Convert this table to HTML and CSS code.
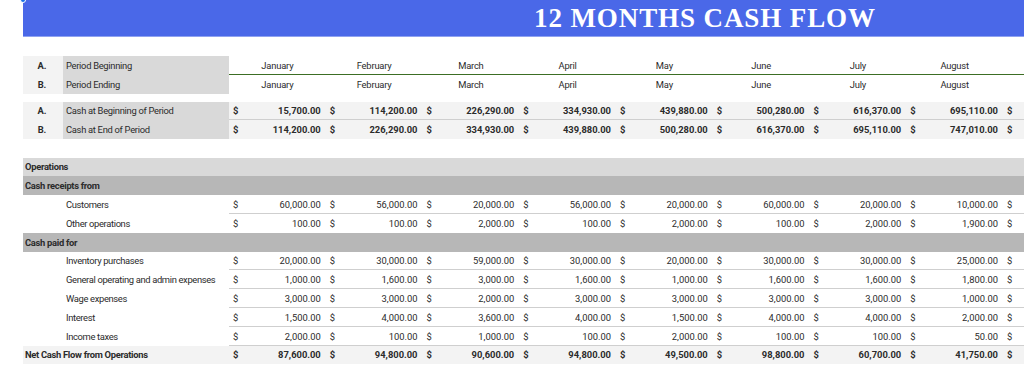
FILE: index.html
```html
<!DOCTYPE html>
<html lang="en">
<head>
<meta charset="utf-8">
<title>12 Months Cash Flow</title>
<link rel="stylesheet" href="styles.css">
</head>
<body>
<div class="sheet">
  <header class="banner">
    <span class="handle"></span>
    <h1 class="title">12 MONTHS CASH FLOW</h1>
  </header>

  <section class="block period">
    <div class="row green-below">
      <div class="letter">A.</div><div class="label">Period Beginning</div>
      <div class="m">January</div><div class="m">February</div><div class="m">March</div><div class="m">April</div><div class="m">May</div><div class="m">June</div><div class="m">July</div><div class="m">August</div><div class="m"></div>
    </div>
    <div class="row">
      <div class="letter">B.</div><div class="label">Period Ending</div>
      <div class="m">January</div><div class="m">February</div><div class="m">March</div><div class="m">April</div><div class="m">May</div><div class="m">June</div><div class="m">July</div><div class="m">August</div><div class="m"></div>
    </div>
  </section>

  <section class="block cash">
    <div class="row strong line-below">
      <div class="letter">A.</div><div class="label">Cash at Beginning of Period</div>
      <div class="v"><span>$</span><span>15,700.00</span></div><div class="v"><span>$</span><span>114,200.00</span></div><div class="v"><span>$</span><span>226,290.00</span></div><div class="v"><span>$</span><span>334,930.00</span></div><div class="v"><span>$</span><span>439,880.00</span></div><div class="v"><span>$</span><span>500,280.00</span></div><div class="v"><span>$</span><span>616,370.00</span></div><div class="v"><span>$</span><span>695,110.00</span></div><div class="v"><span>$</span></div>
    </div>
    <div class="row strong">
      <div class="letter">B.</div><div class="label">Cash at End of Period</div>
      <div class="v"><span>$</span><span>114,200.00</span></div><div class="v"><span>$</span><span>226,290.00</span></div><div class="v"><span>$</span><span>334,930.00</span></div><div class="v"><span>$</span><span>439,880.00</span></div><div class="v"><span>$</span><span>500,280.00</span></div><div class="v"><span>$</span><span>616,370.00</span></div><div class="v"><span>$</span><span>695,110.00</span></div><div class="v"><span>$</span><span>747,010.00</span></div><div class="v"><span>$</span></div>
    </div>
  </section>

  <section class="block ops">
    <div class="row head1"><div class="section">Operations</div></div>
    <div class="row head2"><div class="section">Cash receipts from</div></div>
    <div class="row item line-below">
      <div class="sub">Customers</div>
      <div class="v"><span>$</span><span>60,000.00</span></div><div class="v"><span>$</span><span>56,000.00</span></div><div class="v"><span>$</span><span>20,000.00</span></div><div class="v"><span>$</span><span>56,000.00</span></div><div class="v"><span>$</span><span>20,000.00</span></div><div class="v"><span>$</span><span>60,000.00</span></div><div class="v"><span>$</span><span>20,000.00</span></div><div class="v"><span>$</span><span>10,000.00</span></div><div class="v"><span>$</span></div>
    </div>
    <div class="row item">
      <div class="sub">Other operations</div>
      <div class="v"><span>$</span><span>100.00</span></div><div class="v"><span>$</span><span>100.00</span></div><div class="v"><span>$</span><span>2,000.00</span></div><div class="v"><span>$</span><span>100.00</span></div><div class="v"><span>$</span><span>2,000.00</span></div><div class="v"><span>$</span><span>100.00</span></div><div class="v"><span>$</span><span>2,000.00</span></div><div class="v"><span>$</span><span>1,900.00</span></div><div class="v"><span>$</span></div>
    </div>
    <div class="row head2"><div class="section">Cash paid for</div></div>
    <div class="row item line-below">
      <div class="sub">Inventory purchases</div>
      <div class="v"><span>$</span><span>20,000.00</span></div><div class="v"><span>$</span><span>30,000.00</span></div><div class="v"><span>$</span><span>59,000.00</span></div><div class="v"><span>$</span><span>30,000.00</span></div><div class="v"><span>$</span><span>20,000.00</span></div><div class="v"><span>$</span><span>30,000.00</span></div><div class="v"><span>$</span><span>30,000.00</span></div><div class="v"><span>$</span><span>25,000.00</span></div><div class="v"><span>$</span></div>
    </div>
    <div class="row item line-below">
      <div class="sub">General operating and admin expenses</div>
      <div class="v"><span>$</span><span>1,000.00</span></div><div class="v"><span>$</span><span>1,600.00</span></div><div class="v"><span>$</span><span>3,000.00</span></div><div class="v"><span>$</span><span>1,600.00</span></div><div class="v"><span>$</span><span>1,000.00</span></div><div class="v"><span>$</span><span>1,600.00</span></div><div class="v"><span>$</span><span>1,600.00</span></div><div class="v"><span>$</span><span>1,800.00</span></div><div class="v"><span>$</span></div>
    </div>
    <div class="row item line-below">
      <div class="sub">Wage expenses</div>
      <div class="v"><span>$</span><span>3,000.00</span></div><div class="v"><span>$</span><span>3,000.00</span></div><div class="v"><span>$</span><span>2,000.00</span></div><div class="v"><span>$</span><span>3,000.00</span></div><div class="v"><span>$</span><span>3,000.00</span></div><div class="v"><span>$</span><span>3,000.00</span></div><div class="v"><span>$</span><span>3,000.00</span></div><div class="v"><span>$</span><span>1,000.00</span></div><div class="v"><span>$</span></div>
    </div>
    <div class="row item line-below">
      <div class="sub">Interest</div>
      <div class="v"><span>$</span><span>1,500.00</span></div><div class="v"><span>$</span><span>4,000.00</span></div><div class="v"><span>$</span><span>3,600.00</span></div><div class="v"><span>$</span><span>4,000.00</span></div><div class="v"><span>$</span><span>1,500.00</span></div><div class="v"><span>$</span><span>4,000.00</span></div><div class="v"><span>$</span><span>4,000.00</span></div><div class="v"><span>$</span><span>2,000.00</span></div><div class="v"><span>$</span></div>
    </div>
    <div class="row item line-below">
      <div class="sub">Income taxes</div>
      <div class="v"><span>$</span><span>2,000.00</span></div><div class="v"><span>$</span><span>100.00</span></div><div class="v"><span>$</span><span>1,000.00</span></div><div class="v"><span>$</span><span>100.00</span></div><div class="v"><span>$</span><span>2,000.00</span></div><div class="v"><span>$</span><span>100.00</span></div><div class="v"><span>$</span><span>100.00</span></div><div class="v"><span>$</span><span>50.00</span></div><div class="v"><span>$</span></div>
    </div>
    <div class="row total strong">
      <div class="section">Net Cash Flow from Operations</div>
      <div class="v"><span>$</span><span>87,600.00</span></div><div class="v"><span>$</span><span>94,800.00</span></div><div class="v"><span>$</span><span>90,600.00</span></div><div class="v"><span>$</span><span>94,800.00</span></div><div class="v"><span>$</span><span>49,500.00</span></div><div class="v"><span>$</span><span>98,800.00</span></div><div class="v"><span>$</span><span>60,700.00</span></div><div class="v"><span>$</span><span>41,750.00</span></div><div class="v"><span>$</span></div>
    </div>
  </section>
</div>
</body>
</html>
```

FILE: styles.css
```css
* { box-sizing: border-box; }

html, body {
  margin: 0;
  padding: 0;
  background: #ffffff;
}

body {
  font-family: Roboto, "Liberation Sans", sans-serif;
  font-size: 9.4px;
  color: #2b2b2b;
  overflow: hidden;
}

.sheet {
  padding-left: 23px;
}

.banner {
  position: relative;
  height: 37px;
  background: #4a68e8;
  border-bottom: 1px solid #8fa2f0;
  display: flex;
  align-items: center;
  padding-left: 511px;
}

.handle {
  position: absolute;
  left: -3px;
  top: -3px;
  width: 6px;
  height: 6px;
  border-radius: 50%;
  background: #1a73e8;
  border: 1px solid #ffffff;
}

.title {
  margin: 0;
  font-family: "Liberation Serif", "DejaVu Serif", serif;
  font-weight: bold;
  font-size: 27px;
  letter-spacing: 0.9px;
  color: #ffffff;
  line-height: 1;
}

.block.period { margin-top: 19px; }
.block.cash { margin-top: 8px; }
.block.ops { margin-top: 18.4px; }

.row {
  display: grid;
  grid-template-columns: 40px 166px repeat(8, 96.75px) 1fr;
  height: 18.8px;
}

.row > div {
  display: flex;
  align-items: center;
  white-space: nowrap;
  overflow: hidden;
}

.letter {
  justify-content: center;
  font-weight: bold;
  background: #f3f3f3;
  padding-right: 2px;
}

.label {
  background: #d9d9d9;
  padding-left: 3px;
  letter-spacing: -0.3px;
}

.m {
  justify-content: center;
  letter-spacing: -0.2px;
}

.green-below .m {
  box-shadow: inset 0 -1px 0 #3c6e24;
}

.v {
  justify-content: space-between;
  padding: 0 5px 0 4px;
}

.strong .v { font-weight: bold; }

.cash .v { background: #f3f3f3; }

.line-below .v {
  box-shadow: inset 0 -1px 0 #cfcfcf;
}

.section {
  grid-column: 1 / 3;
  font-weight: bold;
  padding-left: 2px;
  letter-spacing: -0.3px;
}

.head1 .section,
.head2 .section {
  grid-column: 1 / -1;
}

.head1 { background: #d9d9d9; }
.head2 { background: #b7b7b7; }

.sub {
  grid-column: 1 / 3;
  padding-left: 43px;
  letter-spacing: -0.35px;
}

.total { background: #f3f3f3; }
```
